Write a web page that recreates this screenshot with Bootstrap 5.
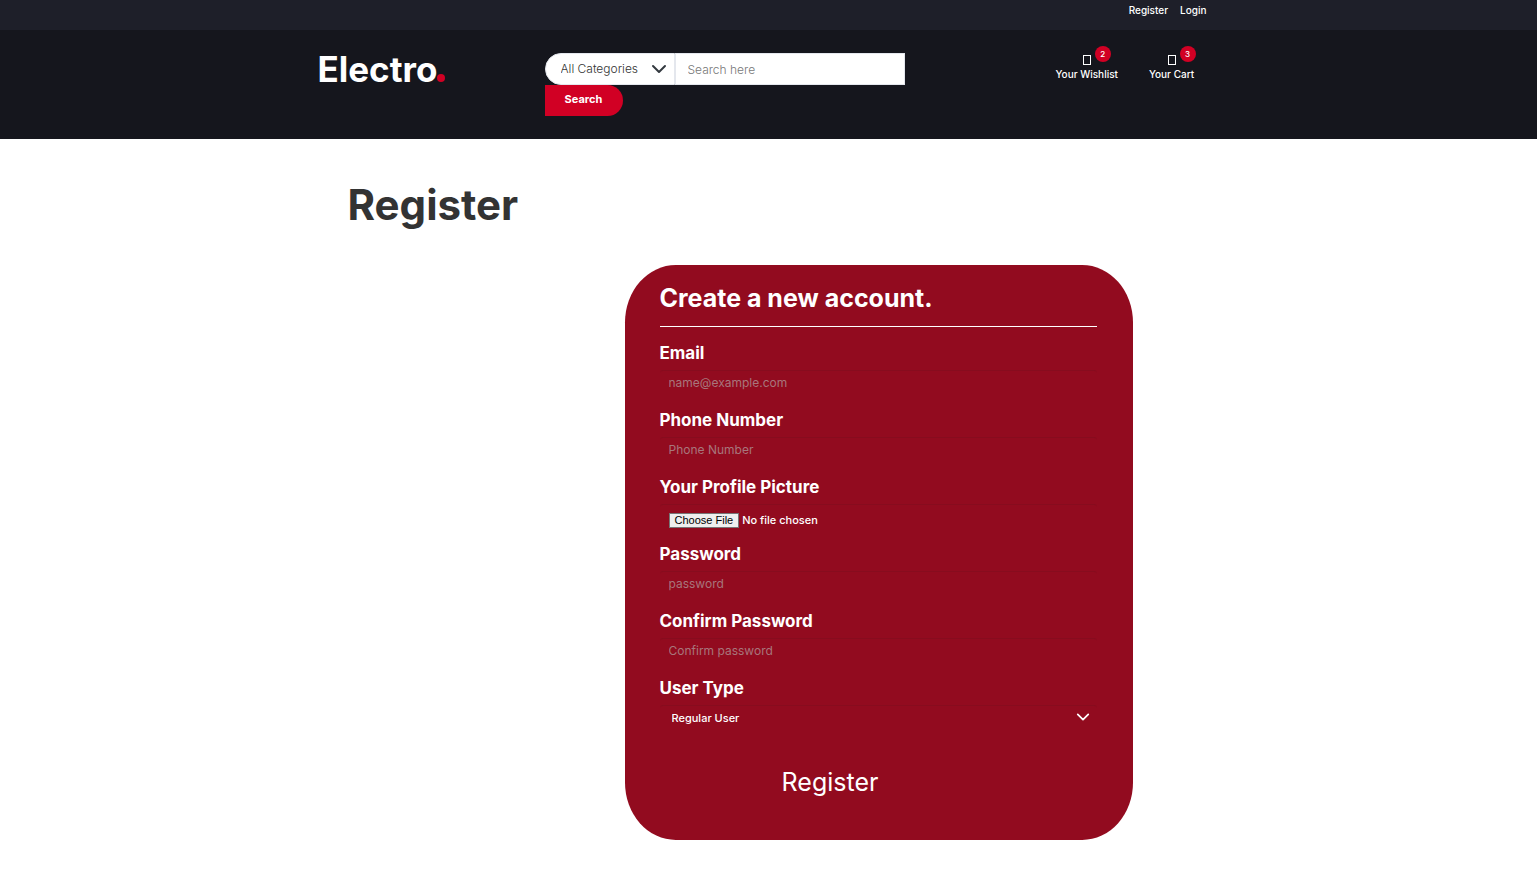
<!DOCTYPE html>
<html lang="en">
<head>
<meta charset="utf-8">
<meta name="viewport" content="width=device-width, initial-scale=1">
<title>Register - Electro</title>
<link href="https://cdn.jsdelivr.net/npm/bootstrap@5.3.0/dist/css/bootstrap.min.css" rel="stylesheet">
<style>
  body { font-family: Inter, "Noto Sans", sans-serif; font-size: 11px; font-weight: 500; color: #333; }
  .shop-width { max-width: 936px; }
  .top-bar { height: 30px; font-size: 10px; line-height: 20px; padding-right: 30px; }
  .top-strip { background: #1e1f29; }
  .main-bar { background: #15161d; padding: 23px 0; }
  .brand { font-size: 35px; font-weight: 700; line-height: 32px; padding-left: 17px; }
  .brand-dot { display: inline-block; width: 8px; height: 8px; border-radius: 50%; background: #d10024; }
  .search-col { padding-left: 10px; }
  .search-col .form-select, .search-col .form-control { height: 32px; border: 1px solid #e4e7ed; font-size: 12px; font-weight: 300; color: #333; }
  .search-col .form-select { width: 130px; border-radius: 32px 0 0 32px; padding: 0 30px 0 15px; background-position: right 7px center; background-size: 16px 16px; }
  .search-col .form-control { width: 230px; border-radius: 0; padding: 0 12px; }
  .search-col .form-control::placeholder { color: #777; }
  .search-btn { width: 78px; height: 31px; padding: 0 0 2px; border: 0; border-radius: 0 32px 32px 0; background: #d10024; color: #fff; font-size: 11px; font-weight: 700; }
  .shop-link { font-size: 10px; line-height: 14px; padding-top: 14px; }
  .glyph-box { position: absolute; top: 2px; left: 50%; margin-left: -4px; width: 8px; height: 10px; border: 1px solid #fff; }
  .count { position: absolute; top: -7px; left: 50%; margin-left: 8px; width: 16px; height: 16px; border-radius: 50%; background: #d10024; font-size: 8px; line-height: 16px; text-align: center; }
  .shop-links { gap: 31px; padding-left: 53px; }
  .page-title { font-size: 42px; font-weight: 700; line-height: 48px; margin: 42px 0 36px; padding-left: 47px; }
  .account-card { width: 508px; max-width: 100%; margin-left: 324px; padding: 17px 36px 35px 35px; border-radius: 10%; background: #920b1f; color: #fff; }
  .account-card h2 { font-size: 25px; font-weight: 700; line-height: 32px; margin: 0; }
  .account-card hr { margin: 12px 0 17px; border-top: 1px solid #fff; opacity: 1; }
  .field { margin-bottom: 15px; }
  .field label { display: block; font-size: 17px; font-weight: 700; line-height: 18px; padding-bottom: 8px; }
  .field .form-control, .field .form-select { height: 26px; padding: 0 9px 2px; border: 0; border-top: 1px solid #870c1e; border-radius: 3px; background-color: transparent; color: #fff; font-size: 12px; font-weight: 500; line-height: 22px; }
  .field .form-control::placeholder { color: #a8767c; font-weight: 400; opacity: 1; }
  .field .form-select { padding-left: 12px; font-size: 11px; background-position: right 7px top 4px; background-size: 14px 14px; background-image: url("data:image/svg+xml,%3csvg xmlns='http://www.w3.org/2000/svg' viewBox='0 0 16 16'%3e%3cpath fill='none' stroke='white' stroke-linecap='round' stroke-linejoin='round' stroke-width='2' d='m2 5 6 6 6-6'/%3e%3c/svg%3e"); }
  .field .form-control[type=file] { padding-top: 8px; font-size: 11px; line-height: 15px; overflow: visible; }
  .field .form-control::file-selector-button,
  .field .form-control:hover:not(:disabled):not([readonly])::file-selector-button { height: 15px; margin: 0 3px 0 0; padding: 0 5px; border: 1px solid #767676; border-radius: 0; background: #efefef; color: #000; font: 11px/13px "Liberation Sans", sans-serif; }
  .submit-btn { display: block; margin: 0 auto; padding: 0; border: 0; background: none; color: #fff; font-size: 25px; font-weight: 400; line-height: 36px; }
  .submit-row { padding: 18px 96px 5px 0; }
</style>
</head>
<body>
<header class="text-white">
  <div class="top-strip">
    <nav class="container shop-width top-bar d-flex justify-content-end" aria-label="Account">
      <a href="#register" class="text-white text-decoration-none me-2 pe-1">Register</a>
      <a href="#login" class="text-white text-decoration-none">Login</a>
    </nav>
  </div>
  <div class="main-bar">
    <div class="container shop-width px-0">
      <div class="row g-0">
        <div class="col-3"><a href="#home" class="brand d-block text-white text-decoration-none">Electro<span class="brand-dot"></span></a></div>
        <form class="col-6 search-col">
          <div class="d-flex">
            <select class="form-select" aria-label="Category"><option>All Categories</option></select>
            <input class="form-control" type="text" placeholder="Search here" aria-label="Search">
          </div>
          <button type="button" class="search-btn d-block">Search</button>
        </form>
        <div class="col-3 d-flex align-items-start shop-links text-nowrap">
          <a href="#wishlist" class="shop-link position-relative text-white text-decoration-none"><span class="glyph-box"></span>Your Wishlist<span class="count">2</span></a>
          <a href="#cart" class="shop-link position-relative text-white text-decoration-none"><span class="glyph-box"></span>Your Cart<span class="count">3</span></a>
        </div>
      </div>
    </div>
  </div>
</header>
<main class="container shop-width px-0">
  <h1 class="page-title">Register</h1>
  <form class="account-card">
    <h2>Create a new account.</h2>
    <hr>
    <div class="field"><label for="email">Email</label><input id="email" type="email" class="form-control" placeholder="name@example.com"></div>
    <div class="field"><label for="phone">Phone Number</label><input id="phone" type="tel" class="form-control" placeholder="Phone Number"></div>
    <div class="field"><label for="picture">Your Profile Picture</label><input id="picture" type="file" class="form-control"></div>
    <div class="field"><label for="password">Password</label><input id="password" type="password" class="form-control" placeholder="password"></div>
    <div class="field"><label for="confirm">Confirm Password</label><input id="confirm" type="password" class="form-control" placeholder="Confirm password"></div>
    <div class="field"><label for="usertype">User Type</label><select id="usertype" class="form-select"><option>Regular User</option></select></div>
    <div class="submit-row"><button type="button" class="submit-btn">Register</button></div>
  </form>
</main>
<script src="https://cdn.jsdelivr.net/npm/bootstrap@5.3.0/dist/js/bootstrap.bundle.min.js"></script>
</body>
</html>
